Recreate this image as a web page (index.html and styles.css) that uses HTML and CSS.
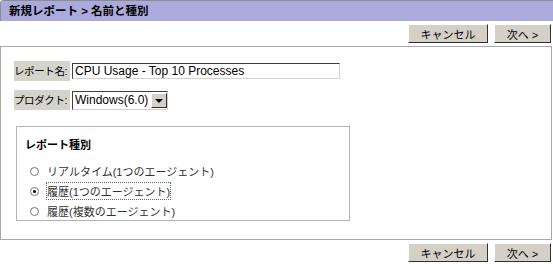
FILE: index.html
```html
<!DOCTYPE html>
<html lang="ja">
<head>
    <meta charset="UTF-8">
    <title>新規レポート</title>
    <link rel="stylesheet" href="styles.css">
</head>
<body>
    <div class="header">新規レポート &gt; 名前と種別</div>

    <div class="toolbar">
        <button class="button cancel">キャンセル</button>
        <button class="button next">次へ &gt;</button>
    </div>

    <div class="panel">
        <div class="field">
            <span class="label">レポート名:</span>
            <input type="text" class="text-input" value="CPU Usage - Top 10 Processes">
        </div>
        <div class="field">
            <span class="label">プロダクト:</span>
            <div class="select">
                <span class="select-value">Windows(6.0)</span>
                <span class="select-arrow"></span>
            </div>
        </div>

        <div class="group">
            <div class="group-title">レポート種別</div>
            <label class="radio-row"><span class="radio"></span>リアルタイム(1つのエージェント)</label>
            <label class="radio-row"><span class="radio checked"></span><span class="focus">履歴(1つのエージェント)</span></label>
            <label class="radio-row"><span class="radio"></span>履歴(複数のエージェント)</label>
        </div>
    </div>

    <div class="toolbar">
        <button class="button cancel">キャンセル</button>
        <button class="button next">次へ &gt;</button>
    </div>
</body>
</html>
```

FILE: styles.css
```css
body {
    margin: 0;
    width: 553px;
    font-family: "Liberation Sans", "Noto Sans CJK JP", sans-serif;
    font-size: 12px;
    color: #000;
    background: #fff;
}

.header {
    height: 20px;
    line-height: 20px;
    background: #aaaadc;
    border-top: 1px solid #8c8c8c;
    border-left: 1px solid #8c8c8c;
    border-top-left-radius: 4px;
    padding-left: 8px;
    font-weight: bold;
    font-size: 11.5px;
}

.toolbar {
    display: flex;
    justify-content: flex-end;
    gap: 6px;
    padding: 3px 2px 3px 0;
}

.button {
    height: 19px;
    padding: 0;
    background: #d4d0c8;
    border: 1px solid;
    border-color: #fff #303030 #303030 #fff;
    font-family: "Liberation Sans", "Noto Sans CJK JP", sans-serif;
    font-size: 11px;
    color: #000;
}

.button.cancel {
    width: 80px;
}

.button.next {
    width: 57px;
}

.panel {
    height: 178px;
    margin-right: 1px;
    border: 1px solid #a8a8a8;
    padding: 14px 0 0 13px;
}

.field {
    display: flex;
    align-items: center;
    gap: 2px;
    margin-bottom: 9px;
}

.label {
    min-width: 56px;
    height: 20px;
    line-height: 20px;
    background: #d4d4cc;
    font-size: 10.5px;
    letter-spacing: -0.4px;
    white-space: nowrap;
}

.text-input {
    width: 262px;
    height: 14px;
    padding: 0 2px;
    margin: 0;
    border: 1px solid;
    border-color: #404040 #d4d0c8 #d4d0c8 #404040;
    font-family: "Liberation Sans", sans-serif;
    font-size: 12px;
}

.select {
    display: flex;
    align-items: center;
    height: 17px;
    border: 1px solid;
    border-color: #404040 #d4d0c8 #d4d0c8 #404040;
    padding-left: 2px;
}

.select-value {
    font-size: 12px;
    padding-right: 3px;
}

.select-arrow {
    position: relative;
    width: 16px;
    height: 15px;
    background: #d4d0c8;
    border: 1px solid;
    border-color: #fff #303030 #303030 #fff;
    box-sizing: border-box;
}

.select-arrow::after {
    content: "";
    position: absolute;
    left: 3px;
    top: 5px;
    border-left: 4px solid transparent;
    border-right: 4px solid transparent;
    border-top: 4px solid #000;
}

.group {
    width: 324px;
    height: 93px;
    margin: 16px 0 0 2px;
    border: 1px solid #b4b4b4;
    padding: 0 0 0 8px;
}

.group-title {
    font-weight: bold;
    font-size: 11px;
    margin: 9px 0 9px;
}

.radio-row {
    display: flex;
    align-items: center;
    height: 20px;
    padding-left: 5px;
    font-size: 11px;
    color: #333;
}

.radio {
    position: relative;
    width: 7px;
    height: 7px;
    border: 1px solid #777;
    border-radius: 50%;
    margin-right: 8px;
    background: #fff;
}

.radio.checked::after {
    content: "";
    position: absolute;
    left: 2px;
    top: 2px;
    width: 3px;
    height: 3px;
    border-radius: 50%;
    background: #000;
}

.focus {
    outline: 1px dotted #666;
}
```
